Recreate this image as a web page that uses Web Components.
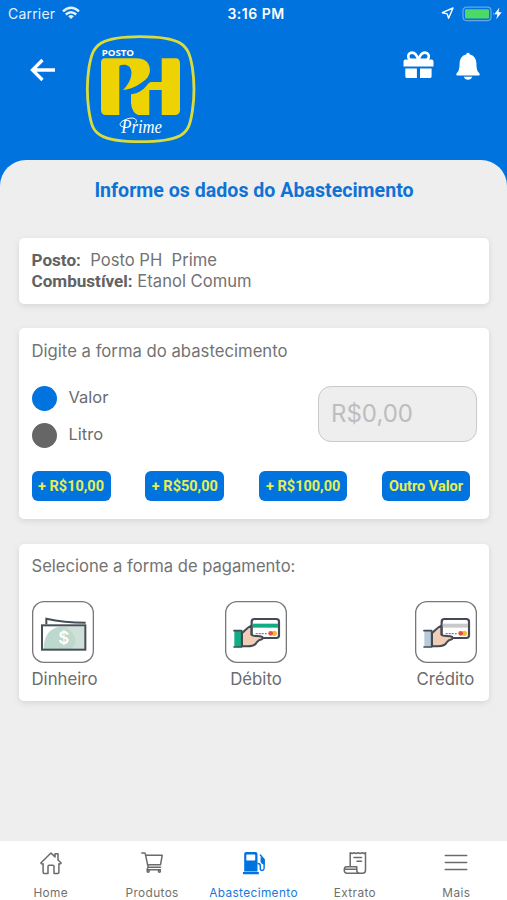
<!DOCTYPE html>
<html lang="pt-BR">
<head>
<meta charset="utf-8">
<title>Abastecimento</title>
<style>
html,body{margin:0;padding:0}
body{width:507px;height:900px;overflow:hidden;background:#0073df;font-family:Inter,"Liberation Sans",sans-serif;color:#6c6c6c}
</style>
</head>
<body>
<fuel-app></fuel-app>
<script>
const define = (name, html) => customElements.define(name, class extends HTMLElement {
  constructor() {
    super();
    const t = document.createElement('template');
    t.innerHTML = html;
    this.attachShadow({mode: 'open'}).append(t.content.cloneNode(true));
  }
});

define('status-bar', `
<style>
:host{display:grid;grid-template-columns:1fr auto 1fr;align-items:center;height:28px;padding:0 6px 0 8px;color:#fff;font-size:14px;box-sizing:border-box}
.l,.r{display:flex;align-items:center}
.l{letter-spacing:.2px;opacity:.9;margin-top:-1px}
.l svg{margin:-1px 0 0 7px}
.t{font-weight:600;letter-spacing:.5px;font-size:14px;padding-left:3px;margin-top:-1px}
.r{justify-content:flex-end;margin-top:-1px}
svg{display:block}
</style>
<div class="l"><span>Carrier</span><svg width="18" height="14" viewBox="0 0 18 14" fill="none" stroke="#fff" stroke-width="2.4"><path d="M1 5.4Q9-1.8 17 5.4"/><path d="M3.8 8.5Q9 3.8 14.2 8.5"/><path d="M9 13 6.2 10.2Q9 7.8 11.8 10.2Z" fill="#fff" stroke="none"/></svg></div>
<div class="t">3:16 PM</div>
<div class="r">
<svg width="13" height="13" viewBox="0 0 13 13" fill="none" stroke="#fff" stroke-width="1.4" stroke-linejoin="round" style="margin-right:3px"><path d="M12 1 7.6 11.3 6.2 6.9 1.3 5.7Z"/></svg>
<svg width="34" height="16" viewBox="0 0 34 16" style="margin-left:5px"><rect x="1" y="1.2" width="28" height="13.4" rx="3.5" fill="none" stroke="#69a7ea" stroke-width="1.2"/><rect x="3" y="3.2" width="24" height="9.4" rx="1" fill="#4cd964"/><path d="M31 5.8q1.6 2 0 4z" fill="#69a7ea"/></svg>
<svg width="8" height="13" viewBox="0 0 8 13" style="margin:0 -1px 0 -2px"><path d="M5.4.5.3 7.3H3.4L2.3 12.3 7.7 5.3H4.5Z" fill="#fff"/></svg>
</div>`);

define('brand-logo', `
<style>:host{display:block;width:120px;height:118px}svg{display:block}</style>
<svg width="120" height="118" viewBox="0 0 360 354">
<path d="M181 20C232 20 273 24 300 39C325 54 331 78 337 112C343 152 343 205 337 244C331 283 325 303 300 317C273 331 232 335 181 335C130 335 90 331 64 317C38 303 33 282 27 244C21 205 21 152 27 112C33 78 39 54 64 39C90 24 130 20 181 20Z" fill="none" stroke="#d9dc3c" stroke-width="8.5"/>
<path fill="#edd204" d="M74 85H168C194 85 210 98 210 121C209 143 193 154 174 165C160 173 149 178 129 180C145 165 156 144 154 124C152 109 142 103 130 104C123 104 118 106 118 110V255H78C68 255 63 249 63 240V98C63 90 67 85 74 85Z"/>
<path fill="#edd204" d="M245 85H288C296 85 300 91 300 100V239C300 249 294 255 284 255H245V180H208V255H174C160 250 152 232 153 211C153 201 153 196 153 193C176 190 188 181 201 166C205 161 208 156 215 156H245Z"/>
<text x="65" y="77" font-family="Noto Sans,sans-serif" font-weight="700" font-size="28" textLength="97" lengthAdjust="spacingAndGlyphs" fill="#fff">POSTO</text>
<text x="124" y="308" font-family="Liberation Serif,serif" font-style="italic" font-size="54" textLength="122" lengthAdjust="spacingAndGlyphs" fill="#fff">Prime</text>
<path d="M136 291C112 292 115 273 148 265C163 262 174 268 167 280" fill="none" stroke="#fff" stroke-width="3"/>
</svg>`);

define('app-header', `
<style>
:host{display:flex;height:132px;box-sizing:border-box;padding:2px 27px 0 30px}
svg{display:block}.back{margin-top:27.5px}.logo{margin-left:25px}.acts{margin:21px 0 0 auto;display:flex;gap:22px}
</style>
<svg class="back" width="25" height="24" viewBox="0 0 25 24" fill="none" stroke="#fff" stroke-width="3.3"><path d="M12.5 2 2.5 12 12.5 22M2.5 12H25"/></svg>
<brand-logo class="logo"></brand-logo>
<div class="acts">
<svg width="31" height="28" viewBox="0 0 31 28"><g fill="#fff"><path d="M2.5 8.5h26q2 0 2 2v5.1H.5v-5.1q0-2 2-2zM2.3 17.5h11.6v9.6H4q-1.7 0-1.7-1.7zM17 17.5h11.6v7.9q0 1.7-1.7 1.7H17z"/></g><path d="M15.4 9C14 4.600 12.300 1.600 9.200 1.600C6.500 1.600 5 3.600 5.300 5.800C5.500 7.600 6.600 8.900 8.500 8.900H22.300C24.400 8.900 25.700 7.600 25.800 5.800C26 3.400 24.300 1.600 21.800 1.600C18.600 1.600 16.800 4.600 15.400 9Z" fill="none" stroke="#fff" stroke-width="2.6"/></svg>
<svg width="24" height="29" viewBox="0 0 24 29" fill="#fff" style="margin-top:1px"><path d="M12 .7C13.1.7 13.8 1.4 13.8 2.5C18 3.4 20.2 6.8 20.4 11.2C20.5 17.3 21.4 19.4 23.3 21.2Q24 22 23.6 22.9Q23.2 23.4 22 23.4H2Q.8 23.4.4 22.9Q0 22 .7 21.2C2.6 19.4 3.5 17.3 3.6 11.2C3.8 6.8 6 3.4 10.2 2.5C10.2 1.4 10.9.7 12 .7ZM7.8 24.8H16.2Q15.2 27.8 12 27.8Q8.8 27.8 7.8 24.8Z"/></svg>
</div>`);

define('info-card', `
<style>:host{display:block;box-sizing:border-box;background:#fff;border-radius:5px;box-shadow:0 2px 6px rgba(0,0,0,.1);padding:12px 12.5px}</style><slot></slot>`);

define('station-info', `
<style>:host{display:block;font-size:16.6px;line-height:21px;color:#737373}
b{font-family:Roboto,sans-serif;font-weight:700;color:#626262;font-size:17.1px}
div{height:21px;white-space:pre}</style>
<div><b>Posto:</b><span>  Posto PH  Prime</span></div><div><b>Combustível:</b><span> Etanol Comum</span></div>`);

define('radio-option', `
<style>:host{display:flex;align-items:center;height:25px;gap:12px;font-size:16.5px}
i{width:25px;height:25px;border-radius:50%;background:var(--dot,#666)}span{padding-bottom:4px}</style>
<i></i><span><slot></slot></span>`);

define('amount-button', `
<style>:host{display:flex;align-items:center;justify-content:center;box-sizing:border-box;height:30px;border-radius:6px;background:#0073df;color:#e7ee4e;font:700 14.5px Roboto,sans-serif;white-space:nowrap}span{padding-top:1px}</style><span><slot></slot></span>`);

define('fuel-form', `
<style>
:host{display:block}
h2{font-weight:400;font-size:16.7px;line-height:22px;margin:0;color:#737373}
.row{display:flex;justify-content:space-between;margin-top:24px;height:56px}
.opts{display:grid;gap:12px;align-content:start}
.field{width:159px;height:56px;box-sizing:border-box;border:1.5px solid #c9c9c9;border-radius:13px;background:#eee;color:#bdbdbd;font-size:24px;line-height:54px;padding-left:12.5px}
.btns{display:flex;justify-content:space-between;margin:29px 6.5px 0 0}
</style>
<h2>Digite a forma do abastecimento</h2>
<div class="row"><div class="opts"><radio-option style="--dot:#0073df">Valor</radio-option><radio-option>Litro</radio-option></div><div class="field">R$0,00</div></div>
<div class="btns"><amount-button style="width:79px">+ R$10,00</amount-button><amount-button style="width:79px">+ R$50,00</amount-button><amount-button style="width:88px">+ R$100,00</amount-button><amount-button style="width:88px">Outro Valor</amount-button></div>`);

define('pay-option', `
<style>:host{display:grid;justify-items:start}
.box{width:62px;height:62px;border-radius:12px;box-shadow:inset 0 0 0 1.3px #777}
.cap{font-size:16.8px;line-height:20px;margin-top:6px;white-space:nowrap}</style>
<div class="box"><slot name="icon"></slot></div><div class="cap"><slot></slot></div>`);

define('cash-icon', `
<style>:host{display:block}svg{display:block}</style>
<svg width="62" height="62" viewBox="1 3 186 186"><path d="M36 147C36 108 54 84 84 80H159V147Z" fill="#bdd8cc"/><path d="M100 80h59v67h-42c24-14 18-48-17-67z" fill="#cfe0d9"/><rect x="31" y="76" width="130" height="73" fill="none" stroke="#474e57" stroke-width="6"/><path d="M44 73V56C79 64 119 68 162 68" fill="none" stroke="#474e57" stroke-width="6"/><text x="96" y="131" text-anchor="middle" font-family="Inter,sans-serif" font-weight="600" font-size="51" fill="#fff">$</text></svg>`);

define('card-icon', `
<style>:host{display:block}svg{display:block}</style>
<svg width="62" height="62" viewBox="0 0 186 186" stroke-linejoin="round" stroke-linecap="round">
<rect x="80" y="54" width="82" height="57" rx="8" fill="#fff" stroke="#414a55" stroke-width="6.5"/>
<path d="M83 68h76v12H83z" fill="var(--stripe)"/>
<path d="M93 98h4m5 0h4m5 0h4m6 0h3" stroke="#6b6272" stroke-width="3"/>
<circle cx="148" cy="97" r="8" fill="#f6b636"/><circle cx="137" cy="97" r="7" fill="#e94f3b"/>
<path d="M51 96C61 88 68 78 79 74V101C85 108 101 103 112 108C116 113 110 116 103 117L96 123C91 133 80 136 68 136H51Z" fill="#f1cdb5" stroke="#414a55" stroke-width="6"/>
<path d="M28 89H50V138H28Z" fill="var(--sleeve)"/><path d="M27 89H50V138H27" fill="none" stroke="#414a55" stroke-width="5"/>
</svg>`);

define('payment-form', `
<style>:host{display:block}h2{font-weight:400;font-size:16.6px;line-height:20px;margin:0;color:#737373}.row{display:flex;justify-content:space-between;margin-top:25px}</style>
<h2>Selecione a forma de pagamento:</h2>
<div class="row">
<pay-option>Dinheiro<cash-icon slot="icon"></cash-icon></pay-option>
<pay-option style="justify-items:center">Débito<card-icon slot="icon" style="--stripe:#12ad85;--sleeve:#12ad85"></card-icon></pay-option>
<pay-option style="justify-items:center">Crédito<card-icon slot="icon" style="--stripe:#c9c9cb;--sleeve:#b5cbdc"></card-icon></pay-option>
</div>`);

define('nav-item', `
<style>:host{display:flex;flex-direction:column;align-items:center;color:#707070;font-size:11.8px;letter-spacing:.4px;flex:1 1 0;min-width:0}
:host([active]){color:#1578dc}
.i{height:24px;margin-top:10px}.c{line-height:16px;margin-top:10px;white-space:nowrap}</style>
<div class="i"><slot name="icon"></slot></div><div class="c"><slot></slot></div>`);

define('tab-bar', `
<style>:host{display:flex;background:#fff;height:59px}svg{display:block;fill:none;stroke:#6b6b6b;stroke-width:1.5;stroke-linejoin:round;stroke-linecap:round}</style>
<nav-item><svg slot="icon" width="24" height="24" viewBox="0 0 24 24"><path d="M1.8 12 12 2l4 3.9V2.8h3V9l3.2 3q-.7 1.5-2.3.8v8.500q0 1.200-1.200 1.200H15v-7q0-1.200-1.200-1.200h-3.600Q9 14.300 9 15.500v7H5.300q-1.200 0-1.200-1.200v-8.500Q2.500 13.500 1.800 12Z"/></svg>Home</nav-item>
<nav-item><svg slot="icon" width="24" height="24" viewBox="0 0 24 24"><path d="M1.8 2h2.600q.7 0 .9.900l2.900 13.400M5.700 4.300h16.500l-1.700 9.500H7.700M8 16.300h12.500M8 16.500l-1 2.300h13.500"/><circle cx="8.200" cy="20.300" r="1"/><circle cx="19.400" cy="20.300" r="1"/></svg>Produtos</nav-item>
<nav-item active><svg slot="icon" width="24" height="24" viewBox="0 0 24 24" style="fill:#0073df;stroke:none"><path fill-rule="evenodd" d="M4 1h9.500q2 0 2 2v17.500H2.200V3q0-2 1.800-2zM5 3.500q-.7 0-.7.7v4.600q0 .7.700.7h7.500q.7 0 .7-.7V4.200q0-.7-.7-.7zM1 21.100h15.800v2.100H1z"/><path d="M16 12.500q2.300 0 2.300 2.500v2.500q0 2 1.800 2t2-2V8.500L18.300 4" fill="none" stroke="#0073df" stroke-width="1.400"/><path d="M18.600 5.800 22.600 8.600v5.200q-4-.8-4-3.500z"/></svg>Abastecimento</nav-item>
<nav-item><svg slot="icon" width="24" height="24" viewBox="0 0 24 24"><path d="M7.200 15.500V1.700l2 .8 2-.8 2 .8 2-.8 2 .8 2-.8 2 .8 1.300-.8v17.600q0 3-2.900 3H4q-2.700 0-2.700-2.800v-1.200h12.500v1.300q0 2.700 3 2.700M1.300 18.300q0-2.600 2.500-2.600h10v3M11 6.500h7.500M14 10.200h4.500"/></svg>Extrato</nav-item>
<nav-item><svg slot="icon" width="24" height="24" viewBox="0 0 24 24"><path d="M1.300 4.500h21.400M1.300 11.500h21.400M1.300 18.500h21.400"/></svg>Mais</nav-item>`);

define('fuel-app', `
<style>
:host{display:grid;grid-template-rows:28px 132px 1fr 59px;width:507px;height:900px;background:#0073df}
main{background:#eee;border-radius:26px 26px 0 0;padding:0 18px 0 19px;display:flex;flex-direction:column}
h1{margin:18px 0 35px;text-align:center;font:700 19.6px/25px Roboto,sans-serif;color:#0f73d5}
</style>
<status-bar></status-bar><app-header></app-header>
<main><h1>Informe os dados do Abastecimento</h1>
<info-card style="height:66px"><station-info></station-info></info-card>
<info-card style="height:191px;margin-top:24px"><fuel-form></fuel-form></info-card>
<info-card style="height:157px;margin-top:25px"><payment-form></payment-form></info-card></main>
<tab-bar></tab-bar>`);
</script>
</body>
</html>
